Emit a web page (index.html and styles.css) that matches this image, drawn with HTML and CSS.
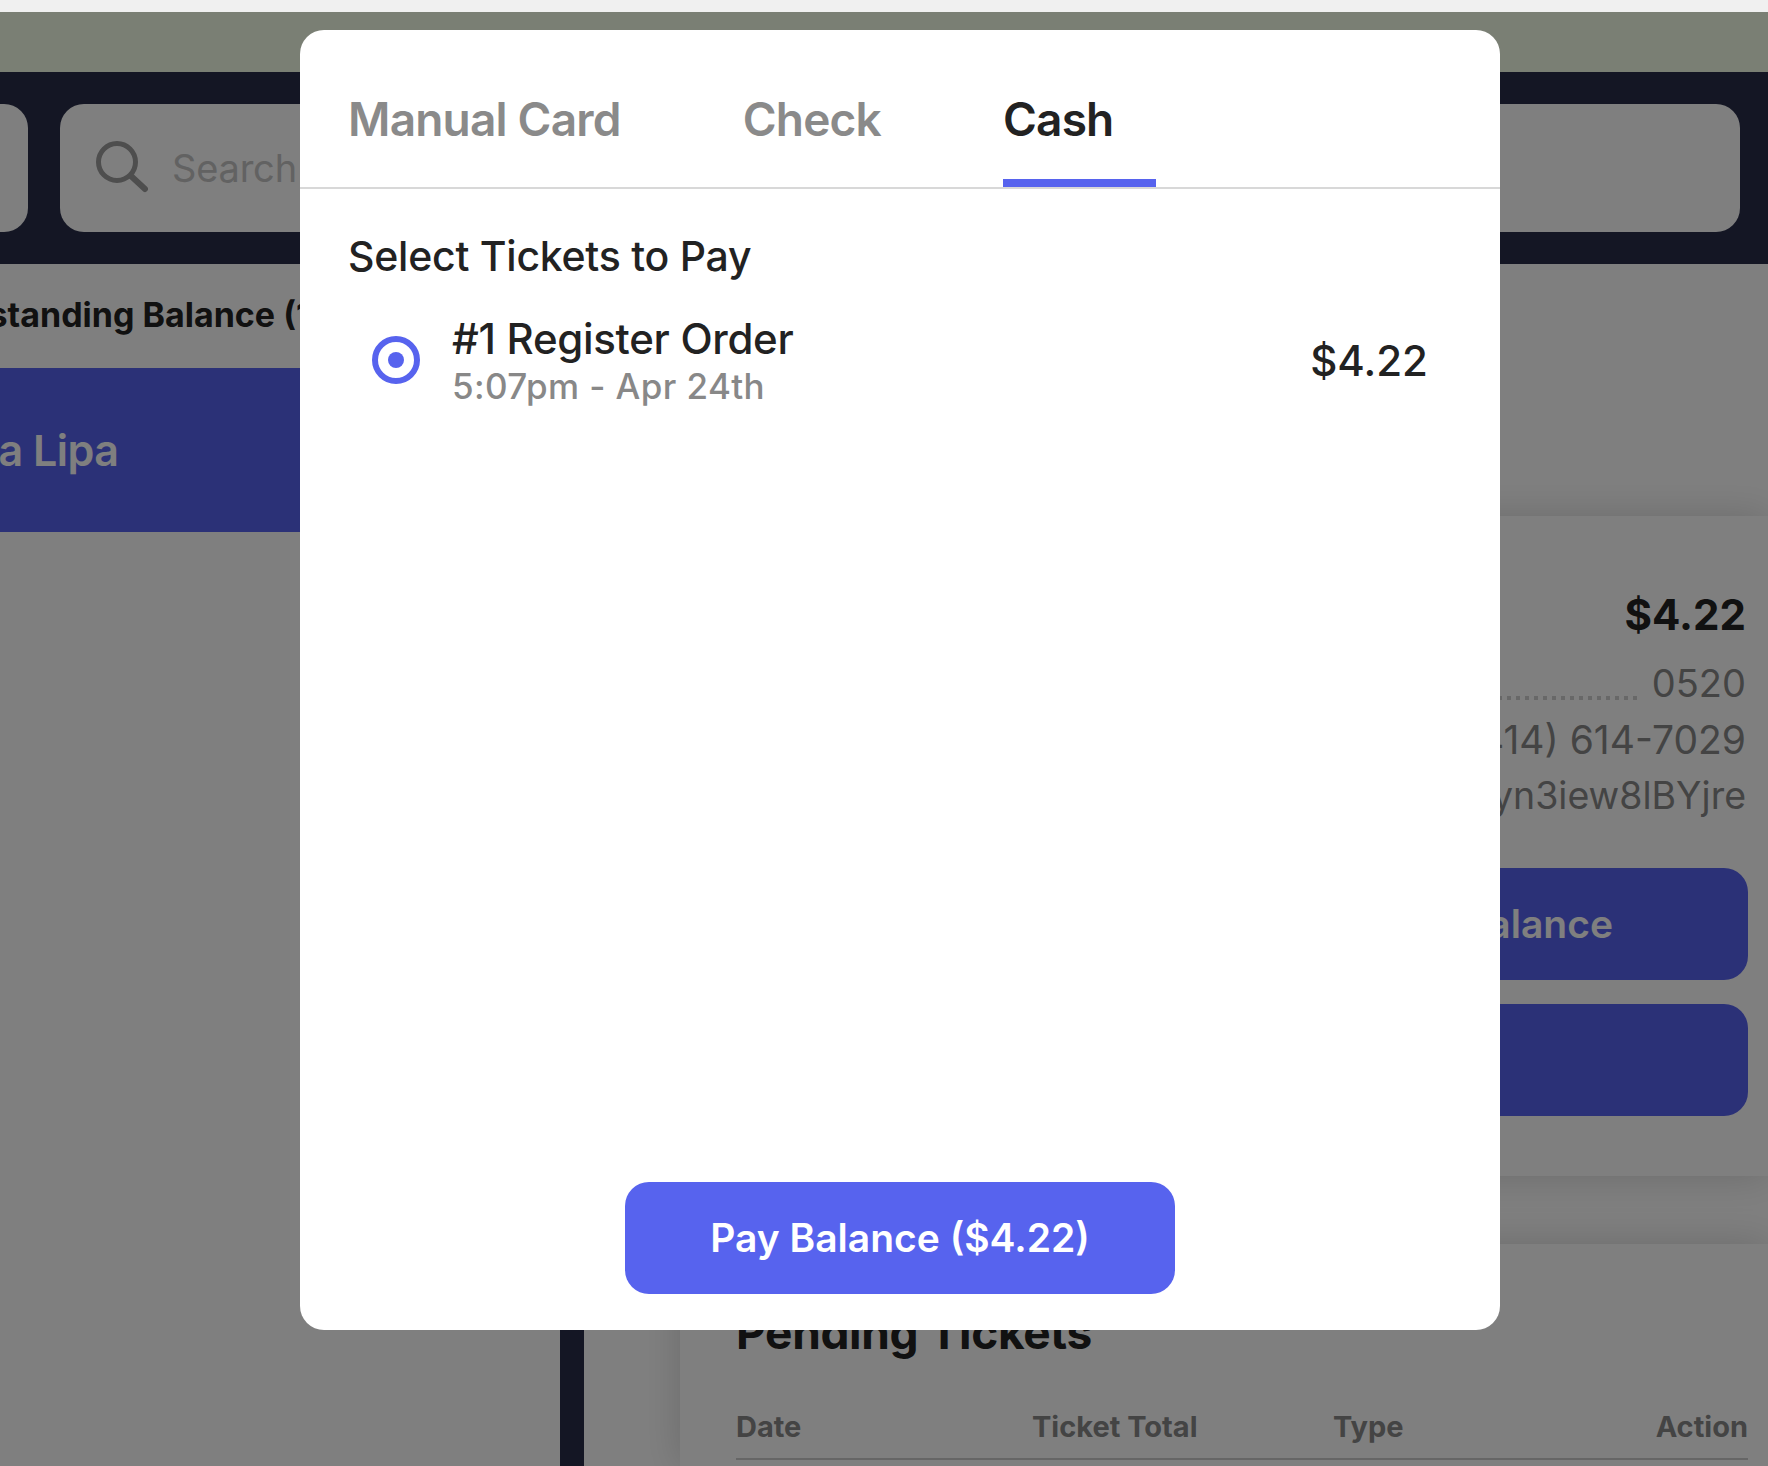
FILE: index.html
```html
<!DOCTYPE html>
<html lang="en">
<head>
<meta charset="utf-8">
<title>Pay Balance</title>
<link rel="stylesheet" href="styles.css">
</head>
<body>
<div class="chrome"></div>
<div class="banner"></div>
<header class="nav">
  <div class="nav-stub"></div>
  <div class="search">
    <svg class="search-icon" viewBox="0 0 52 52" width="52" height="52" aria-hidden="true">
      <circle cx="21" cy="21" r="18.5" fill="none" stroke="#9c9c9c" stroke-width="5"/>
      <path d="M35 35 L49 48" fill="none" stroke="#9c9c9c" stroke-width="6" stroke-linecap="round"/>
    </svg>
    <span class="search-text">Search</span>
  </div>
</header>
<div class="content">
  <aside class="sidebar">
    <div class="side-title">Outstanding Balance (1)</div>
    <div class="side-item">Dua Lipa</div>
  </aside>
  <main class="main">
    <section class="card card-summary">
      <div class="row row-total"><span>Total Balance</span><span>$4.22</span></div>
      <div class="row row-meta row-member"><span>Member ID</span><span class="leader"></span><span>0520</span></div>
      <div class="row row-meta"><span>Phone</span><span>(414) 614-7029</span></div>
      <div class="row row-meta row-token"><span>Token</span><span>yn3iew8lBYjre</span></div>
      <div class="action action-first">Pay Outstanding Balance</div>
      <div class="action action-second"></div>
    </section>
    <section class="card card-pending">
      <h2 class="pending-title">Pending Tickets</h2>
      <div class="table-head">
        <span class="col-date">Date</span>
        <span class="col-total">Ticket Total</span>
        <span class="col-type">Type</span>
        <span class="col-action">Action</span>
      </div>
    </section>
  </main>
</div>
<div class="overlay">
  <div class="modal">
    <nav class="tabs">
      <span class="tab tab-manual">Manual Card</span>
      <span class="tab tab-check">Check</span>
      <span class="tab tab-cash">Cash</span>
    </nav>
    <div class="modal-body">
      <h3 class="select-title">Select Tickets to Pay</h3>
      <div class="ticket">
        <span class="radio"></span>
        <div class="ticket-info">
          <div class="ticket-name">#1 Register Order</div>
          <div class="ticket-date">5:07pm - Apr 24th</div>
        </div>
        <div class="ticket-amount">$4.22</div>
      </div>
    </div>
    <div class="modal-foot">
      <button class="pay-button" type="button">Pay Balance ($4.22)</button>
    </div>
  </div>
</div>
</body>
</html>
```
FILE: styles.css
```css
* { box-sizing: border-box; }
html, body { margin: 0; padding: 0; }
body {
  position: relative;
  width: 1768px;
  height: 1466px;
  overflow: hidden;
  background: #fff;
  font-family: Inter, "Noto Sans", sans-serif;
  color: #222;
}
.chrome { height: 12px; background: #f0f0f0; }
.banner { height: 60px; background: #f4fee8; }
.nav {
  height: 192px;
  background: #282c48;
  display: flex;
  gap: 32px;
  padding: 32px 28px 32px 0;
}
.nav-stub { width: 28px; background: #fff; border-radius: 0 24px 24px 0; }
.search {
  flex: 1;
  background: #fff;
  border-radius: 24px;
  display: flex;
  align-items: center;
  gap: 24px;
  padding: 0 0 0 36px;
}
.search-icon { flex: none; margin-top: -2px; }
.search-text { font-size: 38px; color: #c4c4c4; margin-top: -1px; letter-spacing: -0.2px; }
.content { display: flex; height: 1202px; }
.sidebar {
  width: 584px;
  flex: none;
  border-right: 24px solid #282c48;
  overflow: hidden;
}
.side-title {
  height: 104px;
  display: flex;
  align-items: center;
  margin-left: -71px;
  padding-bottom: 4px;
  font-size: 34px;
  font-weight: 700;
  color: #222;
  white-space: nowrap;
}
.side-item {
  height: 164px;
  background: #5763ee;
  color: #fff;
  display: flex;
  align-items: center;
  margin-left: -58px;
  font-size: 43px;
  font-weight: 600;
  letter-spacing: -0.5px;
}
.main { flex: 1; padding: 252px 0 0 96px; display: flex; flex-direction: column; gap: 68px; }
.card {
  background: #fff;
  box-shadow: 0 0 36px rgba(0, 0, 0, 0.16);
  padding: 0 20px 0 56px;
}
.card-summary { height: 660px; padding-top: 70px; }
.card-pending { flex: 1; padding-top: 56px; }
.row { display: flex; justify-content: space-between; align-items: center; padding-right: 2px; }
.row-total { height: 56px; font-size: 42px; font-weight: 700; color: #222; }
.row-meta { height: 56px; font-size: 39px; color: #888; }
.row-member { font-size: 38px; }
.row-token { font-size: 37.5px; }
.row-total + .row-meta { margin-top: 13px; }
.leader {
  flex: 1;
  align-self: flex-start;
  height: 4px;
  margin: 41px 12px 0 24px;
  background-image: repeating-linear-gradient(to right, #d0d0d0 0 4px, transparent 4px 9px);
}
.action {
  height: 112px;
  background: #5763ee;
  border-radius: 24px;
  color: #fff;
  font-size: 39px;
  font-weight: 600;
  display: flex;
  align-items: center;
  justify-content: flex-end;
  padding-right: 135px;
  padding-bottom: 2px;
}
.action-first { margin-top: 45px; }
.action-second { margin-top: 24px; }
.pending-title { margin: 0; font-size: 46px; font-weight: 700; line-height: 64px; color: #222; letter-spacing: -0.35px; }
.table-head {
  display: grid;
  grid-template-columns: 296px 301px 1fr auto;
  margin-top: 45px;
  padding-bottom: 13px;
  border-bottom: 2px solid #ccc;
  font-size: 29px;
  font-weight: 700;
  line-height: 36px;
  color: #888;
}
.overlay {
  position: absolute;
  inset: 12px 0 0 0;
  background: rgba(0, 0, 0, 0.5);
}
.modal {
  width: 1200px;
  height: 1300px;
  margin: 18px 0 0 300px;
  background: #fff;
  border-radius: 24px;
  display: flex;
  flex-direction: column;
  overflow: hidden;
}
.tabs {
  flex: none;
  height: 159px;
  border-bottom: 2px solid #d8d8d8;
  display: flex;
  gap: 80px;
  padding-left: 48px;
  font-size: 46px;
  font-weight: 600;
  color: #8a8a8a;
  letter-spacing: -0.8px;
}
.tab { padding: 61px 42px 0 0; height: 157px; }
.tab-cash { width: 153px; color: #222; border-bottom: 8px solid #5763ee; }
.modal-body { flex: 1; padding: 41px 72px 0 48px; }
.select-title { margin: 0; font-size: 41px; font-weight: 500; line-height: 52px; color: #222; letter-spacing: -0.25px; }
.ticket { display: flex; align-items: center; margin-top: 32px; padding-left: 24px; }
.radio {
  width: 48px;
  height: 48px;
  flex: none;
  border-radius: 50%;
  border: 6px solid #5763ee;
  display: flex;
  align-items: center;
  justify-content: center;
}
.radio::after { content: ""; width: 16px; height: 16px; border-radius: 50%; background: #5763ee; }
.ticket-info { flex: 1; margin-left: 32px; }
.ticket-name { font-size: 42px; font-weight: 500; line-height: 49px; margin-bottom: 3px; color: #222; letter-spacing: -0.3px; }
.ticket-date { font-size: 35px; font-weight: 500; line-height: 40px; color: #888; letter-spacing: 0.4px; }
.ticket-amount { font-size: 42px; font-weight: 500; color: #222; }
.modal-foot { flex: none; display: flex; justify-content: center; padding: 0 0 36px; }
.pay-button {
  width: 550px;
  height: 112px;
  border: 0;
  border-radius: 24px;
  background: #5763ee;
  color: #fff;
  font-family: inherit;
  font-size: 39px;
  font-weight: 600;
  padding-bottom: 3px;
}
```
